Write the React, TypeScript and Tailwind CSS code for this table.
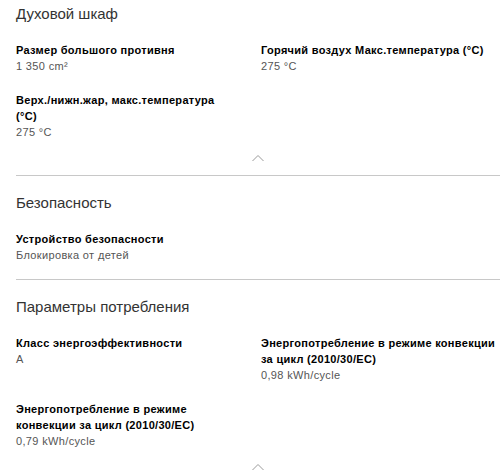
import React from "react";

type Spec = { label: string; value: string };

type Section = { title: string; items: Spec[]; chevron?: boolean; divider?: boolean };

const SECTIONS: Section[] = [
  {
    title: "Духовой шкаф",
    items: [
      { label: "Размер большого противня", value: "1 350 cm²" },
      { label: "Горячий воздух Макс.температура (°C)", value: "275 °C" },
      { label: "Верх./нижн.жар, макс.температура (°C)", value: "275 °C" },
    ],
    chevron: true,
    divider: true,
  },
  {
    title: "Безопасность",
    items: [{ label: "Устройство безопасности", value: "Блокировка от детей" }],
    divider: true,
  },
  {
    title: "Параметры потребления",
    items: [
      { label: "Класс энергоэффективности", value: "A" },
      { label: "Энергопотребление в режиме конвекции за цикл (2010/30/EC)", value: "0,98 kWh/cycle" },
      { label: "Энергопотребление в режиме конвекции за цикл (2010/30/EC)", value: "0,79 kWh/cycle" },
    ],
    chevron: true,
  },
];

function Chevron() {
  return (
    <div className="flex justify-center">
      <svg width="14" height="8" viewBox="0 0 14 8" fill="none" className="text-[#9a9a9a]">
        <path d="M1.5 7L7 1.5L12.5 7" stroke="currentColor" strokeWidth="1" />
      </svg>
    </div>
  );
}

export default function App() {
  return (
    <div
      className="w-[500px] h-[470px] overflow-hidden bg-white pl-4 text-[#222]"
      style={{ fontFamily: '"Liberation Sans", Arial, sans-serif' }}
    >
      {SECTIONS.map((s, i) => (
        <section
          key={i}
          className={(i === 0 ? "pt-[5px] " : "pt-[18px] ") + (s.divider ? "border-b border-[#c8c8c8]" : "")}
        >
          <h2 className="text-[15px] leading-[18px] font-normal text-[#333]">{s.title}</h2>
          <div className="mt-[19px] grid grid-cols-[245px_1fr] gap-y-[18px]">
            {s.items.map((it, j) => (
              <div key={j} className={(j % 2 === 0 ? "pr-[32px] " : "") + "text-[11px] leading-4"}>
                <p className="font-bold tracking-[0.3px] text-black">{it.label}</p>
                <p className="tracking-[0.35px] text-[#555]">{it.value}</p>
              </div>
            ))}
          </div>
          {s.chevron ? (
            <div className="mt-[14px] pb-[13px]">
              <Chevron />
            </div>
          ) : (
            <div className="h-[16px]" />
          )}
        </section>
      ))}
    </div>
  );
}
